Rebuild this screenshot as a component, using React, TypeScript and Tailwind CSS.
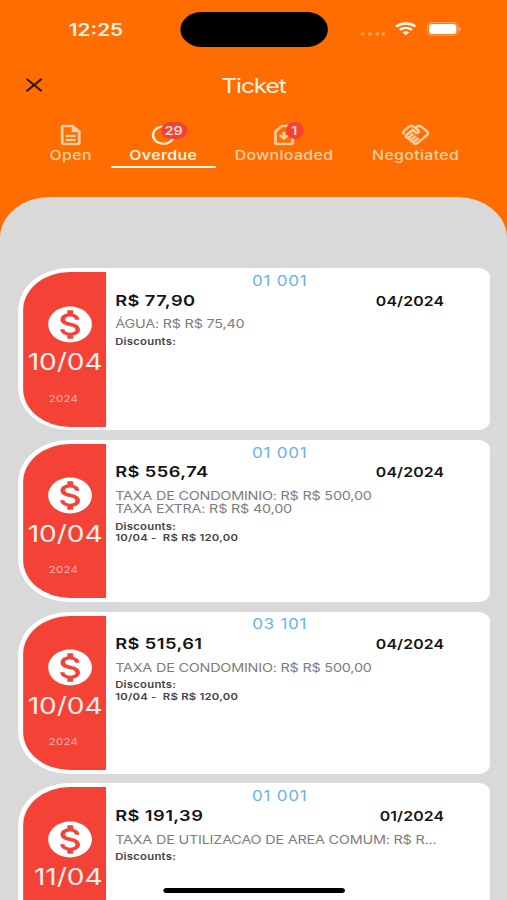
import clsx from 'clsx';
import type { ReactNode } from 'react';
import { MdMonetizationOn, MdOutlineDescription, MdOutlineHandshake, MdOutlineSimCardDownload } from 'react-icons/md';

type Ticket = {
  unit: string;
  amount: string;
  month: string;
  day: string;
  year: string;
  items: string[];
  discounts: string[];
};

const tickets: Ticket[] = [
  {
    unit: '01 001',
    amount: 'R$ 77,90',
    month: '04/2024',
    day: '10/04',
    year: '2024',
    items: ['ÁGUA: R$ R$ 75,40'],
    discounts: [],
  },
  {
    unit: '01 001',
    amount: 'R$ 556,74',
    month: '04/2024',
    day: '10/04',
    year: '2024',
    items: ['TAXA DE CONDOMINIO: R$ R$ 500,00', 'TAXA EXTRA: R$ R$ 40,00'],
    discounts: ['10/04 -  R$ R$ 120,00'],
  },
  {
    unit: '03 101',
    amount: 'R$ 515,61',
    month: '04/2024',
    day: '10/04',
    year: '2024',
    items: ['TAXA DE CONDOMINIO: R$ R$ 500,00'],
    discounts: ['10/04 -  R$ R$ 120,00'],
  },
  {
    unit: '01 001',
    amount: 'R$ 191,39',
    month: '01/2024',
    day: '11/04',
    year: '',
    items: ['TAXA DE UTILIZACAO DE AREA COMUM: R$ R...'],
    discounts: [],
  },
];

function StatusBar() {
  return (
    <div className="flex h-[59px] items-start pt-3">
      <span className="ml-[56.5px] mt-[5.5px] w-[91px] text-[17px] leading-6 font-semibold text-[#fff3e6]">12:25</span>
      <div className="h-[35px] w-[121.5px] rounded-full bg-black" />
      <div className="ml-[27px] mt-[20px] flex gap-[2.8px]">
        {[0, 1, 2, 3].map((dot) => (
          <span key={dot} className="h-[3.5px] w-[3px] rounded-full bg-white/30" />
        ))}
      </div>
      <svg className="ml-[7.8px] mt-[9.5px] h-[14px] w-[18px]" viewBox="0 0 18 14" fill="none" stroke="#fff8f0">
        <path d="M1 4.7C5.6.5 12.4.5 17 4.7" strokeWidth="2.4" />
        <path d="M4 7.9c3-2.6 7-2.6 10 0" strokeWidth="2.2" />
        <path d="M6.2 10.3c1.7-1.4 3.9-1.4 5.6 0L9 13.2z" fill="#fff8f0" stroke="none" />
      </svg>
      <svg className="ml-[8px] mt-[9.5px] h-[14px] w-[29px]" viewBox="0 0 29 14" fill="none">
        <rect x=".6" y=".6" width="25.3" height="12.8" rx="4.2" stroke="#fff" strokeOpacity=".35" strokeWidth="1.1" />
        <rect x="2.1" y="2" width="22.4" height="10" rx="2.8" fill="#fff" />
        <path d="M27 5v4.2c1.6-.6 1.6-3.6 0-4.2z" fill="#fff" fillOpacity=".5" />
      </svg>
    </div>
  );
}

function Tab({ label, icon, badge, active, className }: { label: string; icon: ReactNode; badge?: string; active?: boolean; className: string }) {
  return (
    <button
      className={clsx(
        'flex h-[46px] flex-col items-center border-b-2',
        active ? 'border-[#fff3e6] text-[#fff0df]' : 'border-transparent text-[#ffd0a6]',
        className
      )}
    >
      <span className="relative mt-px h-6 w-6 [&_path[fill=none]]:hidden">
        {icon}
        {badge && (
          <span
            className={clsx(
              'absolute flex h-[17px] items-center justify-center rounded-full bg-[#f44336] text-[12px] font-medium text-[#ffe9e0]',
              badge.length > 1 ? '-top-px left-[9.5px] w-[22px]' : '-top-px left-[13.5px] w-[14px]'
            )}
          >
            {badge}
          </span>
        )}
      </span>
      <span className={clsx('mt-[0.5px] text-[13px] leading-[15px] tracking-[0.3px] whitespace-nowrap', active ? 'font-semibold' : 'font-medium')}>
        {label}
      </span>
    </button>
  );
}

function TicketCard({ ticket }: { ticket: Ticket }) {
  return (
    <div className="flex h-[162px] w-[387px] shrink-0 rounded-l-[42px] rounded-r-[9px] bg-white py-1 pl-1">
      <div className="flex h-[154.5px] w-[67.5px] flex-col items-center rounded-l-[38px] bg-[#f44336] text-[#fff0ee]">
        <MdMonetizationOn className="mt-[30.5px] ml-[9px] size-[43px] shrink-0 text-white" />
        <span className="mt-[2.5px] mr-[2.3px] self-end text-[23px] leading-7 whitespace-nowrap">{ticket.day}</span>
        {ticket.year && <span className="mt-[14.5px] -ml-[1.5px] text-[9.4px] leading-4 tracking-[0.2px] text-[#fbb4ae]">{ticket.year}</span>}
      </div>
      <div className="ml-2 w-[270px]">
        <div className="mt-[0.8px] text-center text-[14px] leading-4 tracking-[0.6px] text-[#69b1ee]">{ticket.unit}</div>
        <div className="mt-[1.9px] flex items-center justify-between leading-5 font-semibold text-[#151515]">
          <span className="text-[15px] tracking-[0.35px]">{ticket.amount}</span>
          <span className="text-[13px] tracking-[0.1px]">{ticket.month}</span>
        </div>
        <div className="mt-[7.5px] text-[11.8px] leading-[13.5px] tracking-[-0.16px] whitespace-nowrap text-[#7d7d7d]">
          {ticket.items.map((item) => (
            <p key={item}>{item}</p>
          ))}
        </div>
        <div className="mt-[4px] text-[9.3px] leading-[11.5px] font-semibold tracking-[0.2px] whitespace-pre text-[#444]">
          <p>Discounts:</p>
          {ticket.discounts.map((discount) => (
            <p key={discount}>{discount}</p>
          ))}
        </div>
      </div>
    </div>
  );
}

export default function App() {
  return (
    <div className="h-[900px] w-[507px] overflow-hidden bg-[#ff6d00]">
      <div className="relative flex h-[900px] w-[416px] origin-left scale-x-[1.21875] flex-col overflow-hidden font-['Inter',sans-serif]">
        <StatusBar />

        <header className="grid h-[52px] shrink-0 grid-cols-[56px_1fr_56px] items-center">
          <button className="flex justify-center" aria-label="Close">
            <svg className="size-[14px]" viewBox="0 0 14 14" stroke="#2b1607" strokeWidth="1.9" strokeLinecap="round">
              <path d="M1.3 1.3l11.4 11.4M12.7 1.3L1.3 12.7" />
            </svg>
          </button>
          <h1 className="mt-px text-center text-[20px] tracking-[-0.85px] text-[#fff3e6]">Ticket</h1>
        </header>

        <nav className="mt-[11px] flex shrink-0 pl-[25px]">
          <Tab className="w-[66px]" label="Open" icon={<MdOutlineDescription className="size-6" strokeWidth={0.3} />} />
          <Tab
            className="w-[86px]"
            label="Overdue"
            badge="29"
            active
            icon={
              <svg className="size-6" viewBox="0 0 24 24" fill="none" stroke="currentColor" strokeWidth="2.1">
                <path d="M13 3.6A8.6 8.6 0 1 0 20 15.5" />
              </svg>
            }
          />
          <Tab className="w-[112px]" label="Downloaded" badge="1" icon={<MdOutlineSimCardDownload className="size-6" strokeWidth={0.3} />} />
          <Tab className="w-[104px]" label="Negotiated" icon={<MdOutlineHandshake className="size-6" strokeWidth={0.3} />} />
        </nav>

        <main className="mt-[28.5px] flex min-h-0 flex-1 flex-col gap-[9.8px] overflow-hidden rounded-t-[41px] bg-[#d9d9d9] pt-[71.5px] pl-[15px]">
          {tickets.map((ticket, index) => (
            <TicketCard key={index} ticket={ticket} />
          ))}
        </main>

        <div className="absolute bottom-[7.5px] left-[134px] h-[5px] w-[149px] rounded-full bg-black" />
      </div>
    </div>
  );
}
